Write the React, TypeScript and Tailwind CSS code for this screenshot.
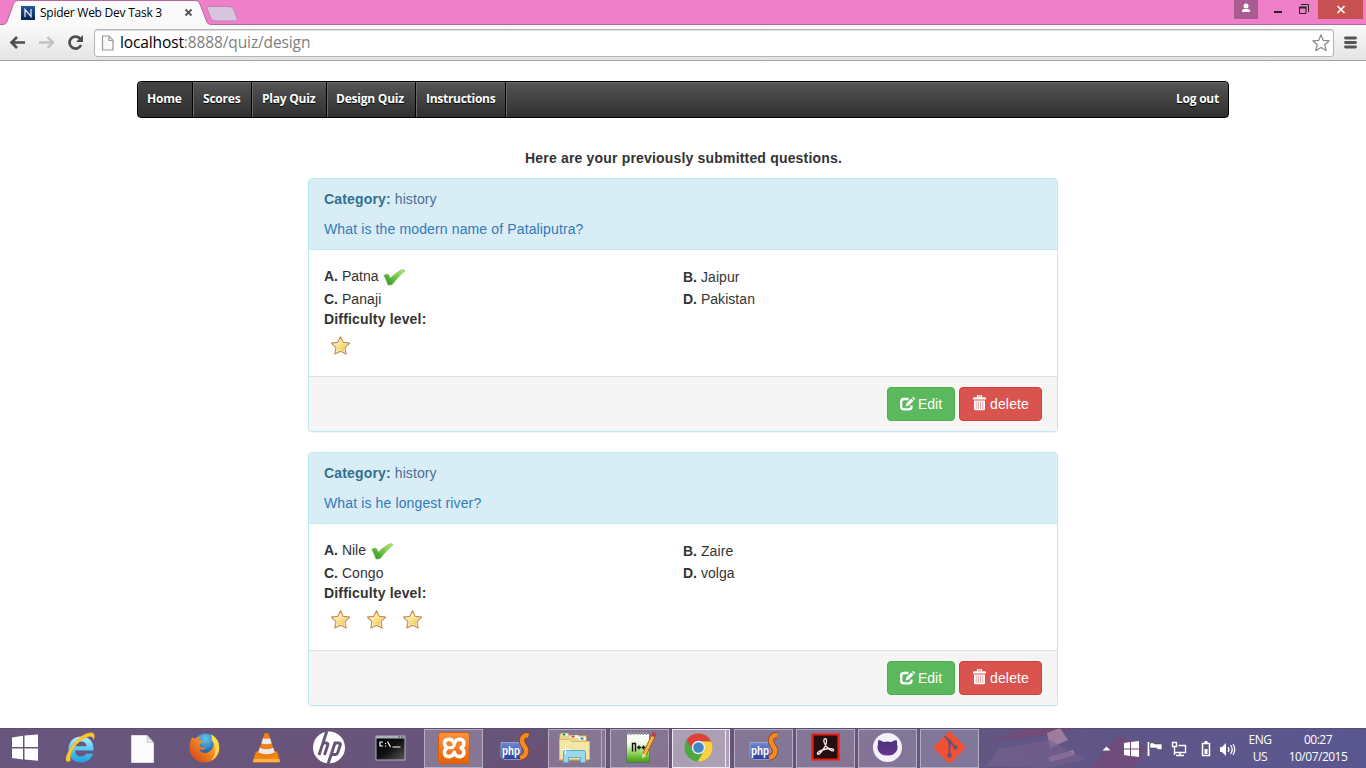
import type { ReactNode } from "react";

const sans = "font-['Liberation_Sans',Arial,sans-serif]";
const ui = "font-['Open_Sans','Noto_Sans',sans-serif]";

function TabShape() {
  return (
    <svg className="absolute left-0 top-0" width="245" height="26" viewBox="0 0 245 26">
      <path d="M208.5 6.5H228c3.500 0 5 .8 6 3.500l3 8.500c.7 2-.3 2.500-2 2.500h-19c-3 0-4.500-1-5.500-3.500l-3.200-8.500c-.6-1.800 0-2.500 1.200-2.500z" fill="#d8c4dc" stroke="#c181b9" />
      <path d="M0 25.500V24.500h2c3 0 4.200-.8 5.200-3.500L13.300 4.500C14.300 1.800 15.500.500 18.500.500H194c3.500 0 5 1 6.200 4L206.500 21c1 2.700 2.200 3.500 5 3.500H245V26H0z" fill="#fafafa" />
      <path d="M0 24.500h2c3 0 4.200-.8 5.200-3.500L13.300 4.500C14.300 1.800 15.500.500 18.500.500H194c3.500 0 5 1 6.200 4L206.500 21c1 2.700 2.200 3.500 5 3.500H245" fill="none" stroke="#b5649c" />
    </svg>
  );
}

function WindowButtons() {
  return (
    <div className="ml-auto flex h-[19px] pr-[3px]">
      <div className="flex w-6 justify-center bg-[#a85c91]">
        <svg width="24" height="19"><circle cx="12" cy="6" r="2.500" fill="#fff" /><path d="M8 12V10.500Q8 9 10 9h4q2 0 2 1.500V12z" fill="#fff" /></svg>
      </div>
      <svg width="60" height="19"><path d="M16 11h8v2h-8z" fill="#222" /><path d="M43 4.500h7.500V12M41.500 7.500h6.500v6h-6.500z" fill="none" stroke="#222" /><path d="M41 6.500h7.500v2H41z" fill="#222" /></svg>
      <svg width="45" height="19" className="bg-[#c75050]"><path d="M19.500 6l7 7M26.500 6l-7 7" stroke="#fff" strokeWidth="1.700" /></svg>
    </div>
  );
}

function Browser() {
  return (
    <header className={ui}>
      <div className="relative flex h-[25px] border-b border-[#b5649c] bg-[#f07fca]">
        <TabShape />
        <div className="relative flex h-[25px] items-center pl-[21px]">
          <svg width="14" height="14" className="mt-px">
            <defs><linearGradient id="fav" x2="0" y2="1"><stop stopColor="#245a9c" /><stop offset="1" stopColor="#0b2250" /></linearGradient></defs>
            <rect width="14" height="14" fill="url(#fav)" />
            <path d="M4 11V3.500l6 7V3" fill="none" stroke="#dfe8f4" strokeWidth="1.300" />
          </svg>
          <span className="ml-[5px] w-[144px] whitespace-nowrap text-xs tracking-[-0.25px] text-black">Spider Web Dev Task 3</span>
          <svg width="9" height="9"><path d="M1.500 1.500l6 6M7.500 1.500l-6 6" stroke="#555" strokeWidth="1.900" /></svg>
        </div>
        <WindowButtons />
      </div>
      <div className="flex h-9 items-center border-b border-[#a3a3a3] bg-linear-to-b from-[#fafafa] to-[#e4e4e4]">
        <svg width="94" height="35" fill="none">
          <path d="M25 17.500H12M17 12l-5.500 5.500L17 23" stroke="#4d4d4d" strokeWidth="2.600" />
          <path d="M39 17.500h13M47.500 12l5.500 5.500L47.500 23" stroke="#c2c2c2" strokeWidth="2.400" />
          <path d="M80.500 14.200A6 6 0 1 0 81 20" stroke="#4d4d4d" strokeWidth="2.700" />
          <path d="M83 10v7h-7z" fill="#4d4d4d" />
        </svg>
        <div className="flex h-[28px] w-[1240px] items-center rounded-[3px] border border-[#b4b4b4] bg-white pl-[6px] shadow-[inset_0_1px_1px_#ddd]">
          <svg width="14" height="16" fill="none" stroke="#999" strokeWidth="1.200"><path d="M1.500 1h6.500l4 4.200V15H1.500z" fill="#fafafa" /><path d="M8 1v4.500h4" /></svg>
          <span className="ml-[5px] whitespace-nowrap pb-px text-[15.500px] leading-5 tracking-[-0.12px] text-[#808080]"><span className="text-black">localhost</span>:8888/quiz/design</span>
          <svg width="20" height="20" className="ml-auto mr-[2px]" fill="none"><path d="M10 1.800l2.300 5.600 6 .4-4.600 3.900 1.500 5.900L10 14.400l-5.200 3.200 1.500-5.900L1.700 7.800l6-.4z" stroke="#8a8a8a" strokeWidth="1.200" strokeLinejoin="round" /></svg>
        </div>
        <svg width="32" height="35"><path d="M11.500 13h10M11.500 17.500h10M11.500 22h10" stroke="#555" strokeWidth="2.800" strokeLinecap="round" /></svg>
      </div>
    </header>
  );
}

function Nav() {
  const link = "flex items-center border-r border-black shadow-[1px_0_0_#686868] pb-[2px] ";
  return (
    <nav className={ui + " mx-auto mt-5 flex h-[37px] w-[1092px] rounded-[4px] border border-black bg-linear-to-b from-[#555] to-[#303030] pl-px text-xs font-bold tracking-[-0.22px] text-white shadow-[inset_0_1px_0_#6a6a6a] [text-shadow:0_1px_1px_#000]"}>
      <a className={link + "w-[54px] bg-linear-to-b from-[#444] to-[#303030] pl-[8px]"}><span>Home</span></a>
      <a className={link + "w-[59px] pl-[10px]"}><span>Scores</span></a>
      <a className={link + "w-[75px] pl-[10px]"}><span>Play Quiz</span></a>
      <a className={link + "w-[89px] pl-[9px]"}><span>Design Quiz</span></a>
      <a className={link + "w-[90px] pl-[10px]"}><span className="tracking-[-0.28px]">Instructions</span></a>
      <a className="ml-auto flex items-center pb-[2px] pr-[9px]"><span>Log out</span></a>
    </nav>
  );
}

function Check() {
  return (
    <svg width="24" height="20" viewBox="0 0 24 20">
      <defs><linearGradient id="chk" x1="1" x2="0" y2="1"><stop stopColor="#b9ef75" /><stop offset=".5" stopColor="#6cc643" /><stop offset="1" stopColor="#268b22" /></linearGradient></defs>
      <path d="M.8 8.300L4.800 7c1.200 1.200 1.700 2.500 2.600 4.200C10.500 8 14.500 5 19.500 2.500l2.500 1.200C17 8 12.500 13 9 17.800l-4 .2C4 15 2.500 11.500.8 8.300z" fill="url(#chk)" stroke="#68b548" strokeWidth=".6" />
    </svg>
  );
}

function Star() {
  return (
    <svg width="32" height="32" viewBox="0 0 32 32">
      <defs><linearGradient id="star" x2="1" y2="1"><stop stopColor="#fff7cf" /><stop offset=".4" stopColor="#fae59a" /><stop offset="1" stopColor="#f0c53c" /></linearGradient></defs>
      <path d="M16.500 7.700l2.800 5.700 6.300.7-4.600 4.500 1.200 6.400-5.700-2.800-5.700 2.800 1.200-6.400-4.600-4.500 6.300-.7z" fill="#fff6d8" stroke="#c48a48" strokeWidth="1.100" strokeLinejoin="round" />
      <path d="M16.500 10.200l2 4.200 4.700.6-3.400 3.200.9 4.700-4.200-2-4.200 2 .9-4.700L9.800 15l4.700-.6z" fill="url(#star)" />
    </svg>
  );
}

function EditIcon() {
  return (
    <svg width="15" height="14" viewBox="0 0 15 14" fill="none" className="-mt-px">
      <path d="M8.500 2H4Q1.200 2 1.200 4.800V9.700Q1.200 12.300 4 12.300H9Q11.500 12.300 11.500 9.700V8.500" stroke="#fff" strokeWidth="2.300" />
      <path d="M5.500 9.500L6.300 6.500 11.300 1.500l2.200 2.200L8.500 8.700zM12 .8l.6-.6q.5-.4 1 0l1.200 1.200q.4.500 0 1l-.6.600z" fill="#fff" />
    </svg>
  );
}

function TrashIcon() {
  return (
    <svg width="14" height="16" viewBox="0 0 14 16" fill="none">
      <path d="M4.500 2.500V.800h4v1.700" stroke="#fff" strokeWidth="1.200" />
      <path d="M0 4.500V3.500Q0 2.300 1.200 2.300h10.600Q13 2.300 13 3.500v1zM1 5.500h11V14Q12 15.300 10.700 15.300H2.300Q1 15.300 1 14z" fill="#fff" />
      <path d="M3.200 6.500v7.500M5.400 6.500v7.500M7.600 6.500v7.500M9.800 6.500v7.500" stroke="#e39a97" strokeWidth=".9" />
    </svg>
  );
}

type Question = { text: string; options: string[]; level: number };

function Panel({ q }: { q: Question }) {
  const [a, b, c, d] = q.options;
  const bold = "font-bold tracking-[0.17px]";
  return (
    <section className="mb-5 w-[750px] rounded-[4px] border border-[#bce8f1] bg-white shadow-[0_1px_1px_rgba(0,0,0,0.05)]">
      <div className="rounded-t-[3px] border-b border-[#bce8f1] bg-[#d9edf7] px-[15px] py-[10px] text-[#31708f]">
        <p className="mb-[10px]"><b className={bold}>Category:</b> <span className="tracking-[0.1px] text-[#4d708f]">history</span></p>
        <p className="tracking-[0.13px] text-[#337ab7]">{q.text}</p>
      </div>
      <div className="p-[15px]">
        <div className="grid h-6 grid-cols-2">
          <div className="flex h-6 items-start pt-px"><span><b>A.</b> {a}</span><span className="ml-[5px] mt-px"><Check /></span></div>
          <div className="pt-[2px]"><b>B.</b> <span className="tracking-[0.1px]">{b}</span></div>
        </div>
        <div className="grid h-5 grid-cols-2"><div><b>C.</b> <span className="tracking-[0.1px]">{c}</span></div><div><b>D.</b> <span className="tracking-[0.05px]">{d}</span></div></div>
        <div className={bold}>Difficulty level:</div>
        <div className="flex h-8 gap-1">{Array.from({ length: q.level }, (_, i) => <Star key={i} />)}</div>
      </div>
      <div className="flex justify-end gap-1 rounded-b-[3px] border-t border-[#ddd] bg-[#f5f5f5] px-[15px] py-[10px] text-white">
        <button className="flex h-[34px] w-[68px] items-center rounded-[4px] border border-[#4cae4c] bg-[#5cb85c] pl-3"><EditIcon /><span className="ml-[3px]">Edit</span></button>
        <button className="flex h-[34px] w-[83px] items-center rounded-[4px] border border-[#d43f3a] bg-[#d9534f] pl-[13px]"><span className="-mt-[2px]"><TrashIcon /></span><span className="ml-[3px] tracking-[0.15px]">delete</span></button>
      </div>
    </section>
  );
}

function Icon({ children }: { children: ReactNode }) {
  return <svg width="34" height="34" viewBox="0.5 0.5 34 34" className="shrink-0">{children}</svg>;
}

function Ie() {
  return (
    <Icon>
      <defs><linearGradient id="ie" x2="0" y2="1"><stop stopColor="#b9efff" /><stop offset=".5" stopColor="#55c9f6" /><stop offset="1" stopColor="#219edf" /></linearGradient></defs>
      <path d="M30 20H11.500c.3 4 2.500 6 6 6 2.700 0 4-1 5-2.700h7C28 28.500 23.500 32 17.500 32 10 32 5 26.800 5 19S10.200 6 17.700 6C26 6 30.500 11.500 30 20zM11.700 15.700h11.500c-.4-3-2.500-4.700-5.600-4.700s-5.300 1.700-5.900 4.700z" fill="url(#ie)" />
      <path d="M7 30c-5 3.500-6-1.500-2-9C10 11 20 2.500 27.500 2.300c3.500 0 4.200 3 2.500 7-.2-3.500-3-4.500-8-2C14 11 5 22 7 30z" fill="#fbc92f" stroke="#e8a71e" strokeWidth=".5" />
    </Icon>
  );
}
function FileIcon() {
  return <Icon><path d="M6 5h15.500L28 12v20H6z" fill="#fcfcfc" stroke="#dedede" /><path d="M21.500 5v7H28z" fill="#e4e4e4" stroke="#bbb" strokeWidth=".6" /></Icon>;
}
function Firefox() {
  return (
    <Icon>
      <defs>
        <radialGradient id="ffb" cx=".5" cy=".2" r=".7"><stop stopColor="#63c8ef" /><stop offset="1" stopColor="#11438f" /></radialGradient>
        <linearGradient id="ffo" x1="1" x2="0" y2="1"><stop stopColor="#ffdc45" /><stop offset=".5" stopColor="#f08223" /><stop offset="1" stopColor="#c83a18" /></linearGradient>
      </defs>
      <circle cx="18" cy="16" r="13" fill="url(#ffb)" />
      <path d="M5 6.500c1 1 1.500 1.500 2.500 1.700 2-1.700 4-2.200 6-2-1.500 1-2.500 2.500-2.400 3.600 1.500.3 3 .4 4.300.7-.2 1.800-2 2.300-3 3.200.1 1.500-.2 2-.7 2.600 2 .1 4 1.400 6.500.6-1 2.700-4 3-6.500 1.600 2 4.700 8.500 5.500 12.500.5 3-4 2.500-9.500-.7-14.500C30 7 33 13.500 31.500 20.500 30 28 24 32 17 32 9 32 2 26 2 17.500 2 13 3 9.500 5 6.500z" fill="url(#ffo)" />
      <path d="M24 4c6 4 8 9 7.500 15-.7 5-4 9-8 11 6-6 5.500-15 1-20z" fill="#fedb4b" />
    </Icon>
  );
}
function Vlc() {
  return (
    <Icon>
      <path d="M6.500 21h21l2.700 9q.6 2-1.200 2H5q-1.800 0-1.200-2z" fill="#f08a16" stroke="#cf690c" strokeWidth=".7" />
      <path d="M4 28.500h26l.5 3H3.500z" fill="#f9b34b" />
      <path d="M15 3q2-1 4 0l7.500 22.500q-9.500 4-19 0z" fill="#f17f12" />
      <path d="M13.500 7.800q3.500 1 7 0l1.700 5q-5.200 2-10.400 0zM10.200 17.300q6.800 3 13.600 0l1.500 4.800q-8.300 3.300-16.600 0z" fill="#e9eaed" />
    </Icon>
  );
}
function Hp() {
  return <Icon><circle cx="17.500" cy="17" r="16" fill="#fff" /><path d="M15.300.8L7.500 24.500M11 12.500h3.500q2.500 0 1.700 2.300L13 24.500M16.500 33.500l7-21H27q2.500 0 1.700 2.300l-2.500 7.300q-.6 1.900-2.500 1.900h-3.600" fill="none" stroke="#665476" strokeWidth="2.900" /></Icon>;
}
function Cmd() {
  return (
    <Icon>
      <defs><linearGradient id="cmd" x2="1" y2="1"><stop /><stop offset=".5" stopColor="#111" /><stop offset="1" stopColor="#555" /></linearGradient></defs>
      <rect x="2" y="5" width="30" height="25" fill="#aab3bb" /><rect x="3" y="8" width="28" height="21" fill="url(#cmd)" /><path d="M25 6.500h1.500m1 0H29m1 0h1" stroke="#334" />
      <path d="M9.500 11.500h-3v4h3M12 12.500v1m0 1.500v1M14 11l3 5.500M19 16.500h8" fill="none" stroke="#fff" strokeWidth="1.200" />
    </Icon>
  );
}
function Xampp() {
  return (
    <Icon>
      <defs><linearGradient id="xam" x2="0" y2="1"><stop stopColor="#fa9442" /><stop offset="1" stopColor="#e76106" /></linearGradient></defs>
      <rect x="2" y="2" width="31" height="31" rx="3" fill="url(#xam)" stroke="#d65c0c" />
      <path d="M17.700 13.300C16.700 10 15 8.700 12.300 8.700 9.500 8.700 8 10.500 8 13c0 2 1 3.300 2.800 4.300C9 18.300 8 19.800 8 21.800c0 2.700 1.500 4.300 4.300 4.300 3.200 0 4.500-1.500 5.400-4.300.8 2.800 2.300 4.300 5.200 4.300s4.500-1.600 4.500-4.300c0-2-1-3.500-2.900-4.500 1.900-1 2.900-2.300 2.900-4.300 0-2.500-1.600-4.300-4.500-4.300-2.700 0-4.200 1.300-5.200 4.600z" fill="none" stroke="#fff" strokeWidth="3.600" strokeLinejoin="round" />
      <path d="M10.800 17.300h3.400q3 0 3.500-3" fill="none" stroke="#fff" strokeWidth="3" />
    </Icon>
  );
}
function PhpStorm() {
  return (
    <Icon>
      <defs><linearGradient id="pst" x2="0" y2="1"><stop stopColor="#7189d4" /><stop offset="1" stopColor="#273d99" /></linearGradient></defs>
      <path d="M3.500 12h20v17H6.500l-3-3z" fill="url(#pst)" stroke="#b9c5e8" strokeWidth=".6" />
      <path d="M31 5C27 4 24 7 24.500 11.200c.6 4 5.300 6 4 10.800-.8 3-3.200 4.800-6 5.300" fill="none" stroke="#873b14" strokeWidth="6" />
      <path d="M31 5C27 4 24 7 24.500 11.200c.6 4 5.300 6 4 10.800-.8 3-3.200 4.800-6 5.300" fill="none" stroke="#f58a22" strokeWidth="4.600" />
      <text x="4.500" y="24.500" fill="#fff" fontSize="12" fontWeight="700" fontFamily="Liberation Sans, sans-serif" textLength="18" lengthAdjust="spacingAndGlyphs">php</text>
    </Icon>
  );
}
function Folder() {
  return (
    <Icon>
      <path d="M2 5l1-2h8l1 2h17l1 25H2z" fill="#ead58e" stroke="#b49a4b" />
      <path d="M4 4h6M13 6h8M21 8h7" stroke="#fff" strokeWidth="2.500" /><path d="M5 4h3" stroke="#2a9b34" strokeWidth="2" /><path d="M14 6h3" stroke="#cd3c25" strokeWidth="2" /><path d="M23 8h3" stroke="#337ed2" strokeWidth="2" />
      <path d="M2 9h10l2 2h18v18H2z" fill="#f6e6a5" stroke="#d6bd69" />
      <path d="M6 32V22q0-2 2-2h18q2 0 2 2v10h-5v-5H11v5z" fill="#9ad6ee" stroke="#5ca9cc" />
      <path d="M8 14v10M3 19h10" stroke="#fff" />
    </Icon>
  );
}
function Npp() {
  return (
    <Icon>
      <defs><linearGradient id="npp" x2="0" y2="1"><stop stopColor="#fff" /><stop offset=".35" stopColor="#f0fae6" /><stop offset=".75" stopColor="#7cc944" /><stop offset="1" stopColor="#3f9a12" /></linearGradient></defs>
      <path d="M4 3h23v29H4z" fill="url(#npp)" stroke="#667" strokeWidth=".8" /><path d="M5 3h21" stroke="#999" strokeWidth="3" strokeDasharray="1.500 1.500" />
      <path d="M10 21v-8h3v8M14.500 17h4m-2-2v4M19 17h4m-2-2v4" fill="none" stroke="#111" strokeWidth="1.400" />
      <path d="M31 5L22 24" stroke="#aa5f12" strokeWidth="4.500" /><path d="M31 5L22 24" stroke="#f4ba42" strokeWidth="2.800" /><path d="M32.300 2.500L30.500 6" stroke="#c63644" strokeWidth="4.200" /><path d="M20 23l3.800 2-4 3z" fill="#f2dcb1" />
    </Icon>
  );
}
function Chrome() {
  return (
    <Icon>
      <circle cx="17" cy="17" r="14" fill="#4ca746" />
      <path d="M5 9.700A14 14 0 0 1 29.700 11H17a6.500 6.500 0 0 0-6 8z" fill="#dc4237" />
      <path d="M29.700 11A14 14 0 0 1 16 31l6.700-10.500A6.500 6.500 0 0 0 19.500 11z" fill="#fbd03b" />
      <circle cx="17" cy="17" r="6.700" fill="#f2f2f2" /><circle cx="17" cy="17" r="5.300" fill="#4386c8" />
    </Icon>
  );
}
function Acrobat() {
  return <Icon><path d="M4 4h26v25H4z" fill="#250e10" stroke="#f01d0a" strokeWidth="2.200" /><path d="M15.500 9q2-2 2.500.5c.3 3-2 8-5 11.500-1.500 2-3.500 3.500-4 2.500-.8-2 3.500-4 8.500-5 4-.8 8-.3 7.700 1.300-.4 1.800-4-.3-6.500-3C16.500 14.500 15 11 15.500 9z" fill="none" stroke="#f4e9e9" strokeWidth="1.300" /></Icon>;
}
function Github() {
  return (
    <Icon>
      <defs><linearGradient id="gh" x2="0" y2="1"><stop stopColor="#45347b" /><stop offset="1" stopColor="#6d3390" /></linearGradient></defs>
      <circle cx="17" cy="17" r="14.500" fill="#f3f1fa" /><path d="M8 9.500q3 .4 5 2 4-.8 8 0 2-1.600 5-2 1 2.500.5 4.500 1.300 2.500.1 5.500Q24.500 25 17 25T7.400 19.500q-1.100-3 .1-5.500-.5-2 .5-4.500z" fill="url(#gh)" />
    </Icon>
  );
}
function Git() {
  return <Icon><path d="M17 1l16 16-16 16L1 17z" fill="#f05033" stroke="#f05033" strokeLinejoin="round" /><path d="M12 5.500l5 5V25M17 11l6 6" stroke="#665374" strokeWidth="1.900" fill="none" /><circle cx="17" cy="11" r="2.200" fill="#665374" /><circle cx="23" cy="17" r="2.200" fill="#665374" /><circle cx="17" cy="25" r="2.200" fill="#665374" /></Icon>;
}

function Slot({ children, kind = "plain" }: { children: ReactNode; kind?: "plain" | "open" | "stack" | "active" }) {
  if (kind === "plain") return <div className="flex h-10 w-[62px] items-center justify-center">{children}</div>;
  const tone = kind === "active" ? "border-[#eee8f4] bg-white/45" : "border-white/40 bg-white/20";
  const stacked = kind !== "open";
  return (
    <div className="flex h-10 w-[62px] items-center pl-[2px]">
      <div className={"flex h-[39px] items-center justify-center border " + tone + (stacked ? " w-[54px]" : " w-[59px]")}>{children}</div>
      {stacked && <div className={"h-[39px] w-[4px] border-y border-r " + tone} />}
    </div>
  );
}

function Tray() {
  return (
    <svg width="144" height="40" viewBox="1096 0 144 40" className="ml-[116px]" fill="none">
      <path d="M1102.500 22.500h8l-4-4z" fill="#fff" />
      <path d="M1124 15l6-1v6.500h-6zM1131 14l8-1v7.500h-8zM1124 21.500h6V28l-6-1zM1131 21.500h8V29l-8-1z" fill="#fff" />
      <path d="M1148.500 14v14" stroke="#fff" strokeWidth="1.800" /><path d="M1150 15q3-1 5 1h7v5.500q-4 1-6-1.500h-6z" fill="#fff" stroke="#333" strokeWidth=".5" />
      <path d="M1178.500 17.500h7v7h-11v-4M1180 25v2.500M1176 27.500h8M1172.500 14.500h4v4h-4zM1174.500 19v8" stroke="#fff" strokeWidth="1.400" />
      <path d="M1202.500 15.500h7v12h-7z" stroke="#fff" strokeWidth="1.500" /><path d="M1204.500 21h3v5h-3zM1204.500 13h3v2h-3z" fill="#fff" />
      <path d="M1220 19h2l4-4v13l-4-4h-2z" fill="#fff" /><path d="M1228 19q2 2.500 0 5M1230.500 17q3.500 4.500 0 9M1233 16q3.500 5.500 0 11" stroke="#fff" strokeWidth="1.200" />
    </svg>
  );
}

function Taskbar() {
  return (
    <footer className={ui + " relative mt-auto h-10 overflow-hidden bg-linear-to-r from-[#68567e] via-[#675479] to-[#5a5790] text-white"}>
      <svg className="absolute inset-0" width="1366" height="40">
        <path d="M280 40L310 8l40 32zM480 40L550 10l50 12-20 18zM640 40l50-38 55 8-40 30zM812 40l65-35 40 18-40 17z" fill="#814666" opacity=".15" />
        <path d="M983 14L1032 0h47l-25 6zM1090 40l28-32 30 12-14 20z" fill="#8f3d62" opacity=".35" />
        <path d="M1047 5l13-5 8 12-18 8zM1048 29l25-7 2 5-25 7z" fill="#b38aa9" opacity=".75" />
        <path d="M1000 20l50-8 35 20-40 8-60-2z" fill="#76608e" opacity=".6" />
        <path d="M0 .500h1366" stroke="#564667" opacity=".5" />
      </svg>
      <div className="relative flex h-10 items-center">
        <svg width="50" height="40"><path d="M12 9.500l11-1.700V19H12zM24.500 7.500L38 6.500V19H24.500zM12 20.500h11v11l-11-1.500zM24.500 20.500H38v12.200l-13.500-1.200z" fill="#fff" /></svg>
        <Slot><Ie /></Slot><Slot><FileIcon /></Slot><Slot><Firefox /></Slot><Slot><Vlc /></Slot><Slot><Hp /></Slot><Slot><Cmd /></Slot>
        <Slot kind="open"><Xampp /></Slot><Slot><PhpStorm /></Slot><Slot kind="stack"><Folder /></Slot><Slot kind="open"><Npp /></Slot><Slot kind="active"><Chrome /></Slot>
        <Slot kind="open"><PhpStorm /></Slot><Slot kind="open"><Acrobat /></Slot><Slot kind="open"><Github /></Slot><Slot kind="open"><Git /></Slot>
        <Tray />
        <div className="-ml-px w-[42px] text-center text-xs leading-[17px] tracking-[-0.4px]"><div>ENG</div><div>US</div></div>
        <div className="ml-[4px] w-[66px] whitespace-nowrap text-center text-xs leading-[17px] tracking-[-0.5px]"><div>00:27</div><div>10/07/2015</div></div>
      </div>
    </footer>
  );
}

const questions: Question[] = [
  { text: "What is the modern name of Pataliputra?", options: ["Patna", "Jaipur", "Panaji", "Pakistan"], level: 1 },
  { text: "What is he longest river?", options: ["Nile", "Zaire", "Congo", "volga"], level: 3 },
];

export default function App() {
  return (
    <div className="flex h-[768px] w-[1366px] flex-col overflow-hidden bg-white">
      <Browser />
      <Nav />
      <main className={sans + " mx-auto mt-[30px] w-[750px] text-sm leading-5 text-[#333]"}>
        <h1 className="mb-[10px] pl-px text-center font-bold tracking-[0.18px]">Here are your previously submitted questions.</h1>
        {questions.map((q) => <Panel key={q.text} q={q} />)}
      </main>
      <Taskbar />
    </div>
  );
}
